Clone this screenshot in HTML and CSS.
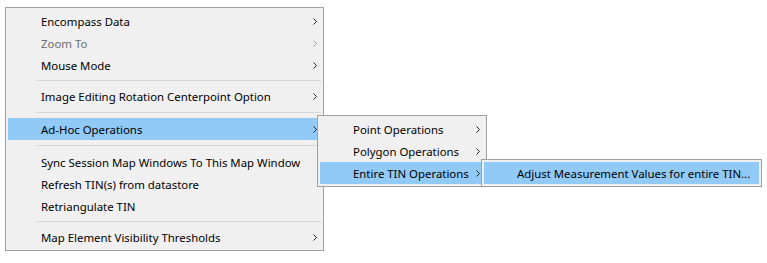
FILE: index.html
```html
<!DOCTYPE html>
<html lang="en">
  <head>
    <meta charset="UTF-8" />
    <title>Context Menu</title>
    <link rel="stylesheet" href="styles.css">
  </head>
  <body>
    <div class="menu main">
      <div class="item">Encompass Data<svg class="arrow" width="4" height="7"><path d="M0.5 0.5 L3.5 3.5 L0.5 6.5" /></svg></div>
      <div class="item disabled">Zoom To<svg class="arrow" width="4" height="7"><path d="M0.5 0.5 L3.5 3.5 L0.5 6.5" /></svg></div>
      <div class="item">Mouse Mode<svg class="arrow" width="4" height="7"><path d="M0.5 0.5 L3.5 3.5 L0.5 6.5" /></svg></div>
      <div class="sep"></div>
      <div class="item">Image Editing Rotation Centerpoint Option<svg class="arrow" width="4" height="7"><path d="M0.5 0.5 L3.5 3.5 L0.5 6.5" /></svg></div>
      <div class="sep wide"></div>
      <div class="item active">
        Ad-Hoc Operations<svg class="arrow" width="4" height="7"><path d="M0.5 0.5 L3.5 3.5 L0.5 6.5" /></svg>
        <div class="menu sub1">
          <div class="item">Point Operations<svg class="arrow" width="4" height="7"><path d="M0.5 0.5 L3.5 3.5 L0.5 6.5" /></svg></div>
          <div class="item">Polygon Operations<svg class="arrow" width="4" height="7"><path d="M0.5 0.5 L3.5 3.5 L0.5 6.5" /></svg></div>
          <div class="item active">
            Entire TIN Operations<svg class="arrow" width="4" height="7"><path d="M0.5 0.5 L3.5 3.5 L0.5 6.5" /></svg>
            <div class="menu sub2">
              <div class="item active">Adjust Measurement Values for entire TIN...</div>
            </div>
          </div>
        </div>
      </div>
      <div class="sep wide"></div>
      <div class="item">Sync Session Map Windows To This Map Window</div>
      <div class="item">Refresh TIN(s) from datastore</div>
      <div class="item">Retriangulate TIN</div>
      <div class="sep"></div>
      <div class="item">Map Element Visibility Thresholds<svg class="arrow" width="4" height="7"><path d="M0.5 0.5 L3.5 3.5 L0.5 6.5" /></svg></div>
    </div>
  </body>
</html>
```

FILE: styles.css
```css
body {
  margin: 0;
  background: #ffffff;
  font-family: "Noto Sans", "Open Sans", sans-serif;
  font-size: 11.4px;
  color: #000000;
}
.menu {
  box-sizing: border-box;
  background: #f0f0f0;
  border: 1px solid #a0a0a0;
  padding: 2px;
}
.main {
  width: 319px;
  margin: 7px 0 0 5px;
}
.item {
  position: relative;
  height: 22px;
  display: flex;
  align-items: center;
  padding-left: 33px;
  padding-right: 4px;
  white-space: nowrap;
}
.item.active {
  background: #91c9f7;
}
.item.disabled {
  color: #6d6d6d;
}
.arrow {
  margin-left: auto;
  fill: none;
  stroke: #222222;
  stroke-width: 1;
}
.disabled .arrow {
  stroke: #a0a0a0;
}
.sep {
  height: 1px;
  background: #d7d7d7;
  margin: 4px 0 4px 28px;
}
.sep.wide {
  margin: 5px 0 5px 28px;
}
.sub1 {
  position: absolute;
  left: 309px;
  top: -3px;
  width: 170px;
}
.sub2 {
  position: absolute;
  left: 161px;
  top: -3px;
  width: 281px;
}
```
